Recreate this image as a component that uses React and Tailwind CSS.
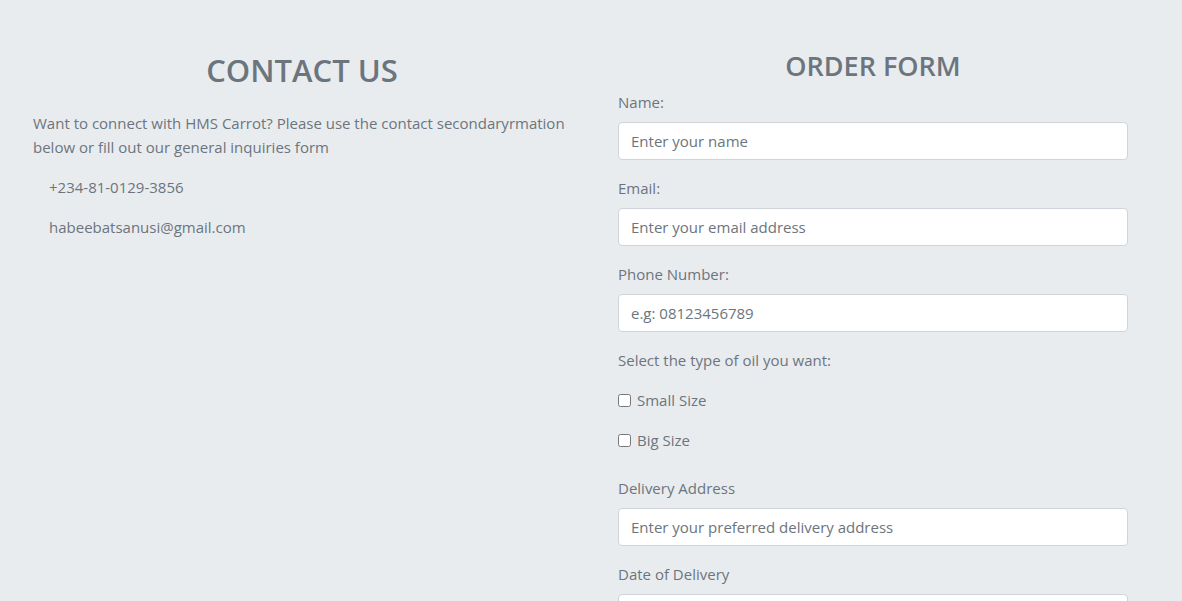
import { useState } from 'react';

// Contact + order form, two columns on a light grey page.

const FIELDS_TOP = [
  { id: 'name',  label: 'Name:',         placeholder: 'Enter your name' },
  { id: 'email', label: 'Email:',        placeholder: 'Enter your email address' },
  { id: 'phone', label: 'Phone Number:', placeholder: 'e.g: 08123456789' },
];

const SIZES = ['Small Size', 'Big Size'];

function Field({ id, label, placeholder, type = 'text' }) {
  return (
    <div className="mb-4">
      <label htmlFor={id} className="block mb-2 leading-6">{label}</label>
      <input
        id={id}
        type={type}
        placeholder={placeholder}
        className="block w-full h-[38px] px-3 bg-white border border-[#ced4da] rounded text-[#495057] placeholder:text-[#6c757d] outline-none"
      />
    </div>
  );
}

export default function App() {
  const [sizes, setSizes] = useState({});

  return (
    <div
      className="min-h-screen bg-[#e9ecef] text-[#6c757d] text-[15px] leading-6"
      style={{ fontFamily: '"Open Sans", "Noto Sans", sans-serif' }}
    >
      <div className="flex gap-[47px] pl-[33px] pt-[48px]">

        {/* 聯絡資訊 */}
        <section className="w-[538px]">
          <h1 className="text-center text-[31px] font-semibold leading-[44px] mb-[19px]">CONTACT US</h1>
          <p className="mb-4">
            Want to connect with HMS Carrot? Please use the contact secondaryrmation below or fill out our general inquiries form
          </p>
          <p className="pl-4 mb-4">+234-81-0129-3856</p>
          <p className="pl-4">habeebatsanusi@gmail.com</p>
        </section>

        {/* 訂購表單 */}
        <section className="w-[510px]">
          <h2 className="text-center text-[27px] font-semibold leading-[36px] mb-[6px]">ORDER FORM</h2>
          <form onSubmit={e => e.preventDefault()}>
            {FIELDS_TOP.map(f => <Field key={f.id} {...f} />)}

            <p className="mb-4">Select the type of oil you want:</p>
            {SIZES.map(s => (
              <label key={s} className="flex items-center gap-[6px] mb-4 leading-6">
                <input
                  type="checkbox"
                  checked={!!sizes[s]}
                  onChange={() => setSizes(p => ({ ...p, [s]: !p[s] }))}
                  className="w-[13px] h-[13px] m-0"
                />
                {s}
              </label>
            ))}

            <div className="pt-2">
              <Field id="address" label="Delivery Address" placeholder="Enter your preferred delivery address" />
              <Field id="date" label="Date of Delivery" placeholder="" />
            </div>
          </form>
        </section>
      </div>
    </div>
  );
}
